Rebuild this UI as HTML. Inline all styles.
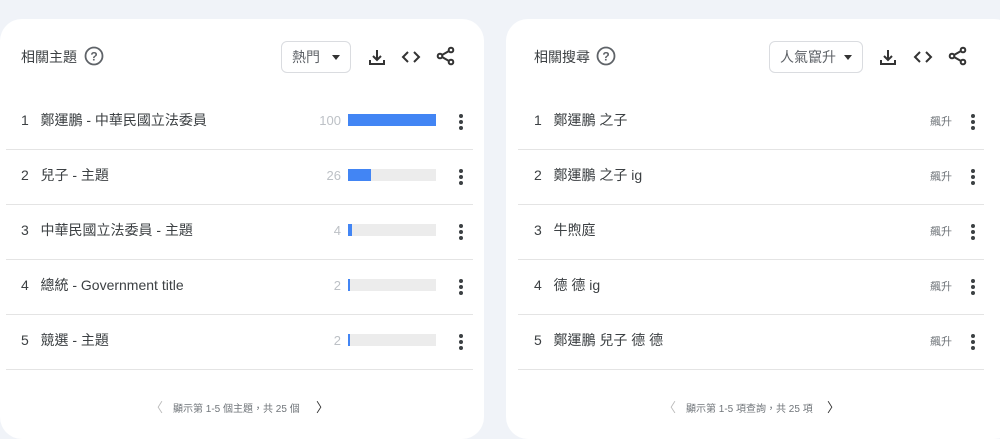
<!DOCTYPE html><html><head><meta charset="utf-8"><style>
*{margin:0;padding:0;box-sizing:border-box}
body{width:1000px;height:418px;background:#f0f3f8;position:relative;overflow:hidden;font-family:"Liberation Sans","Noto Sans CJK TC",sans-serif;color:#3c4043}
.card{position:absolute;top:19px;height:420px;background:#fff;border-radius:22px}
.t{position:absolute;font-size:14px;white-space:nowrap}
.hr{position:absolute;height:1px;background:#e4e4e4}
.dd{position:absolute;border:1px solid #dadce0;border-radius:6px;height:32px;font-size:14px;color:#5f6368;padding:5px 0 0 10px}
.dd:after{content:"";position:absolute;right:10px;top:13px;border:4px solid transparent;border-top:5px solid #333;border-bottom:0}
.dots{position:absolute;width:4px}
.dots i{display:block;width:4px;height:4px;border-radius:2px;background:#3c4043;margin-bottom:2px}
.bar{position:absolute;height:12px;background:#ececec;width:88px;left:348px}
.bar b{display:block;height:12px;background:#4285f4}
.v{position:absolute;font-size:13px;color:#bdc1c6;text-align:right;width:40px;left:301px}
.r{position:absolute;font-size:11px;color:#70757a;left:930px}
.f{position:absolute;font-size:10px;color:#70757a;top:400px}
</style></head><body>
<div class="card" style="left:0;width:484px"></div>
<div class="card" style="left:506px;width:510px"></div>

<div class="t" style="left:21px;top:47px">相關主題</div>
<svg style="position:absolute;left:84px;top:46px" width="20" height="20" viewBox="0 0 20 20"><circle cx="10" cy="10" r="8.5" fill="none" stroke="#5f6368" stroke-width="1.8"/><text x="10" y="14.5" font-size="12" font-weight="bold" text-anchor="middle" fill="#5f6368" font-family="Liberation Sans">?</text></svg>
<div class="dd" style="left:281px;top:41px;width:70px">熱門</div>

<div class="t" style="left:534px;top:47px">相關搜尋</div>
<svg style="position:absolute;left:596px;top:46px" width="20" height="20" viewBox="0 0 20 20"><circle cx="10" cy="10" r="8.5" fill="none" stroke="#5f6368" stroke-width="1.8"/><text x="10" y="14.5" font-size="12" font-weight="bold" text-anchor="middle" fill="#5f6368" font-family="Liberation Sans">?</text></svg>
<div class="dd" style="left:769px;top:41px;width:94px">人氣竄升</div>

<svg style="position:absolute;left:367px;top:47px" width="20" height="20" viewBox="0 0 20 20" fill="none" stroke="#333" stroke-width="2"><path d="M10 3v10M6 9l4 4 4-4M3 13v4h14v-4"/></svg>
<svg style="position:absolute;left:401px;top:48px" width="20" height="18" viewBox="0 0 20 18" fill="none" stroke="#333" stroke-width="2"><path d="M7 4L2 9l5 5M13 4l5 5-5 5"/></svg>
<svg style="position:absolute;left:436px;top:46px" width="20" height="20" viewBox="0 0 20 20" fill="none" stroke="#333" stroke-width="2"><circle cx="15" cy="4" r="2.3"/><circle cx="4" cy="10" r="2.3"/><circle cx="15" cy="16" r="2.3"/><path d="M6 9l7-4M6 11l7 4"/></svg>
<svg style="position:absolute;left:878px;top:47px" width="20" height="20" viewBox="0 0 20 20" fill="none" stroke="#333" stroke-width="2"><path d="M10 3v10M6 9l4 4 4-4M3 13v4h14v-4"/></svg>
<svg style="position:absolute;left:913px;top:48px" width="20" height="18" viewBox="0 0 20 18" fill="none" stroke="#333" stroke-width="2"><path d="M7 4L2 9l5 5M13 4l5 5-5 5"/></svg>
<svg style="position:absolute;left:948px;top:46px" width="20" height="20" viewBox="0 0 20 20" fill="none" stroke="#333" stroke-width="2"><circle cx="15" cy="4" r="2.3"/><circle cx="4" cy="10" r="2.3"/><circle cx="15" cy="16" r="2.3"/><path d="M6 9l7-4M6 11l7 4"/></svg>

<div class="t" style="left:21px;top:110px">1&nbsp;&nbsp;&nbsp;鄭運鵬 - 中華民國立法委員</div>
<div class="t" style="left:21px;top:165px">2&nbsp;&nbsp;&nbsp;兒子 - 主題</div>
<div class="t" style="left:21px;top:220px">3&nbsp;&nbsp;&nbsp;中華民國立法委員 - 主題</div>
<div class="t" style="left:21px;top:275px">4&nbsp;&nbsp;&nbsp;總統 - Government title</div>
<div class="t" style="left:21px;top:330px">5&nbsp;&nbsp;&nbsp;競選 - 主題</div>
<div class="v" style="top:113px">100</div><div class="bar" style="top:114px"><b style="width:88px"></b></div>
<div class="v" style="top:168px">26</div><div class="bar" style="top:169px"><b style="width:23px"></b></div>
<div class="v" style="top:223px">4</div><div class="bar" style="top:224px"><b style="width:4px"></b></div>
<div class="v" style="top:278px">2</div><div class="bar" style="top:279px"><b style="width:2px"></b></div>
<div class="v" style="top:333px">2</div><div class="bar" style="top:334px"><b style="width:2px"></b></div>

<div class="t" style="left:534px;top:110px">1&nbsp;&nbsp;&nbsp;鄭運鵬 之子</div>
<div class="t" style="left:534px;top:165px">2&nbsp;&nbsp;&nbsp;鄭運鵬 之子 ig</div>
<div class="t" style="left:534px;top:220px">3&nbsp;&nbsp;&nbsp;牛煦庭</div>
<div class="t" style="left:534px;top:275px">4&nbsp;&nbsp;&nbsp;德 德 ig</div>
<div class="t" style="left:534px;top:330px">5&nbsp;&nbsp;&nbsp;鄭運鵬 兒子 德 德</div>
<div class="r" style="top:113px">飆升</div><div class="r" style="top:168px">飆升</div><div class="r" style="top:223px">飆升</div><div class="r" style="top:278px">飆升</div><div class="r" style="top:333px">飆升</div>

<div class="dots" style="left:459px;top:114px"><i></i><i></i><i></i></div>
<div class="dots" style="left:459px;top:169px"><i></i><i></i><i></i></div>
<div class="dots" style="left:459px;top:224px"><i></i><i></i><i></i></div>
<div class="dots" style="left:459px;top:279px"><i></i><i></i><i></i></div>
<div class="dots" style="left:459px;top:334px"><i></i><i></i><i></i></div>
<div class="dots" style="left:971px;top:114px"><i></i><i></i><i></i></div>
<div class="dots" style="left:971px;top:169px"><i></i><i></i><i></i></div>
<div class="dots" style="left:971px;top:224px"><i></i><i></i><i></i></div>
<div class="dots" style="left:971px;top:279px"><i></i><i></i><i></i></div>
<div class="dots" style="left:971px;top:334px"><i></i><i></i><i></i></div>

<div class="hr" style="left:6px;width:467px;top:149px"></div><div class="hr" style="left:6px;width:467px;top:204px"></div><div class="hr" style="left:6px;width:467px;top:259px"></div><div class="hr" style="left:6px;width:467px;top:314px"></div><div class="hr" style="left:6px;width:467px;top:369px"></div>
<div class="hr" style="left:518px;width:466px;top:149px"></div><div class="hr" style="left:518px;width:466px;top:204px"></div><div class="hr" style="left:518px;width:466px;top:259px"></div><div class="hr" style="left:518px;width:466px;top:314px"></div><div class="hr" style="left:518px;width:466px;top:369px"></div>

<div class="f" style="left:150px;font-size:13px;color:#bbb;top:397px">〈</div>
<div class="f" style="left:173px">顯示第 1-5 個主題，共 25 個</div>
<div class="f" style="left:316px;font-size:13px;color:#333;top:397px">〉</div>
<div class="f" style="left:663px;font-size:13px;color:#bbb;top:397px">〈</div>
<div class="f" style="left:686px">顯示第 1-5 項查詢，共 25 項</div>
<div class="f" style="left:827px;font-size:13px;color:#333;top:397px">〉</div>
</body></html>
